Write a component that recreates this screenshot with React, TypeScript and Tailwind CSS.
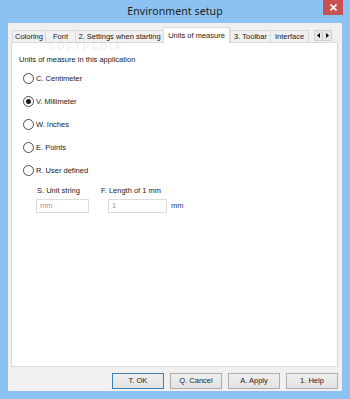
const tabs = [
  { label: "Coloring", w: "w-[34px]" },
  { label: "Font", w: "w-[31px]" },
  { label: "2. Settings when starting", w: "w-[89px]" },
  { label: "Units of measure", w: "w-[67px]", active: true },
  { label: "3. Toolbar", w: "w-[41px]" },
  { label: "Interface", w: "w-[39px]" },
];

const units = [
  { label: "C. Centimeter" },
  { label: "V. Millimeter", checked: true },
  { label: "W. Inches" },
  { label: "E. Points" },
  { label: "R. User defined" },
];

const buttons = [
  { label: "T. OK", primary: true },
  { label: "Q. Cancel" },
  { label: "A. Apply" },
  { label: "1. Help" },
];

const Radio = ({ checked }: { checked?: boolean }) => (
  <span className="w-[11px] h-[11px] rounded-full border border-[#4d4d4d] bg-white flex items-center justify-center shrink-0">
    {checked && <span className="w-[5px] h-[5px] rounded-full bg-[#1a1a1a]" />}
  </span>
);

export default function App() {
  return (
    <div
      className="w-[350px] h-[399px] bg-[#8cc2f2] flex flex-col relative overflow-hidden text-[7.5px] text-[#1a1a1a]"
      style={{ fontFamily: '"Liberation Sans", Arial, sans-serif' }}
    >
      {/* title bar */}
      <div className="h-[23px] flex items-center justify-center shrink-0">
        <span className="text-[10.5px] text-[#202020] tracking-[0.1px]" style={{ fontFamily: '"Noto Sans", sans-serif' }}>
          Environment setup
        </span>
      </div>
      <div className="absolute top-0 right-[7px] w-[20px] h-[15px] bg-[#c75050] flex items-center justify-center">
        <svg width="7" height="7" viewBox="0 0 7 7">
          <path d="M0.5 0.5 L6.5 6.5 M6.5 0.5 L0.5 6.5" stroke="white" strokeWidth="1.6" />
        </svg>
      </div>

      {/* client */}
      <div className="mx-[8px] h-[368px] bg-[#f0f0f0] flex flex-col pl-[3px] pr-[4px]">
        {/* tab strip */}
        <div className="h-[19px] flex items-end pt-[5px] shrink-0">
          <div className="flex items-end ml-[1px]">
            {tabs.map((t) =>
              t.active ? (
                <div
                  key={t.label}
                  className={`${t.w} h-[16px] bg-white border border-b-0 border-[#d9d9d9] flex items-center justify-center whitespace-nowrap -mb-[1px] relative z-10`}
                >
                  {t.label}
                </div>
              ) : (
                <div
                  key={t.label}
                  className={`${t.w} h-[12px] bg-[#f0f0f0] border border-b-0 border-[#d9d9d9] flex items-center justify-center whitespace-nowrap -mr-[1px]`}
                >
                  {t.label}
                </div>
              )
            )}
          </div>
          <div className="ml-[6px] flex mb-[1px]">
            <div className="w-[9px] h-[11px] bg-[#e6e6e6] border border-[#cfcfcf] flex items-center justify-center">
              <svg width="3" height="5" viewBox="0 0 3 5">
                <path d="M3 0 L0 2.5 L3 5 Z" fill="#000" />
              </svg>
            </div>
            <div className="w-[9px] h-[11px] bg-[#e6e6e6] border border-[#cfcfcf] border-l-0 flex items-center justify-center">
              <svg width="3" height="5" viewBox="0 0 3 5">
                <path d="M0 0 L3 2.5 L0 5 Z" fill="#000" />
              </svg>
            </div>
          </div>
        </div>

        {/* panel */}
        <div className="h-[325px] bg-white border border-[#d9d9d9] flex flex-col pl-[7px] pt-[12px] relative">
          <div className="absolute left-[36px] top-[0px] text-[10px] leading-[8px] font-bold tracking-[2px] text-[#000] opacity-[0.06] select-none">
            SOFTPEDIA
          </div>
          <div className="h-[12px] leading-[9px]">Units of measure in this application</div>
          <div className="flex flex-col pl-[4px]">
            {units.map((u) => (
              <div key={u.label} className="h-[23px] flex items-center gap-[2px]">
                <Radio checked={u.checked} />
                <span>{u.label}</span>
              </div>
            ))}
          </div>
          <div className="flex items-end mt-[4px] pl-[17px]">
            <div className="flex flex-col w-[72px]">
              <span className="pl-[1px] leading-[9px]">S. Unit string</span>
              <div className="mt-[4px] w-[53px] h-[14px] border border-[#dcdcdc] flex items-center pl-[3px] text-[#9a9a9a]">
                mm
              </div>
            </div>
            <div className="flex flex-col -ml-[7px]">
              <span className="leading-[9px]">F. Length of 1 mm</span>
              <div className="flex items-center mt-[4px] ml-[7px]">
                <div className="w-[59px] h-[14px] border border-[#dcdcdc] flex items-center pl-[3px] text-[#9a9a9a]">
                  1
                </div>
                <span className="ml-[4px] text-[#30307a]">mm</span>
              </div>
            </div>
          </div>
        </div>

        {/* buttons */}
        <div className="flex justify-end gap-[6px] mt-[6px]">
          {buttons.map((b) => (
            <div
              key={b.label}
              className={`w-[52px] h-[16px] flex items-center justify-center bg-gradient-to-b from-[#efefef] to-[#e3e3e3] border ${
                b.primary ? "border-[#3c7fb1]" : "border-[#adadad]"
              }`}
            >
              {b.label}
            </div>
          ))}
        </div>
      </div>
    </div>
  );
}
